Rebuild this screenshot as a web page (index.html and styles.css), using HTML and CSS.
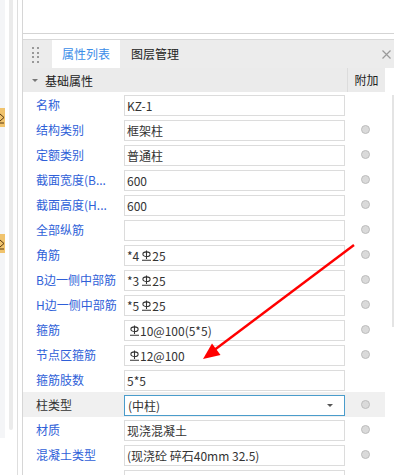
FILE: index.html
```html
<!DOCTYPE html>
<html lang="zh-CN">
<head>
    <meta charset="UTF-8">
    <meta name="viewport" content="width=device-width, initial-scale=1.0">
    <title>属性列表</title>
    <link rel="stylesheet" href="styles.css">
</head>
<body>
    <div class="app">
        <!-- 左侧停靠栏 -->
        <div class="dock">
            <div class="dock-strip">
                <span class="dock-tag tag-1"><svg width="5" height="19" viewBox="0 0 5 19"><path d="M0 6 L4 9.5 L0 13 M0 15 H4" stroke="#5a3a10" stroke-width="1" fill="none"/></svg></span>
                <span class="dock-tag tag-2"><svg width="5" height="19" viewBox="0 0 5 19"><path d="M0 6 L4 9.5 L0 13 M0 15 H4" stroke="#5a3a10" stroke-width="1" fill="none"/></svg></span>
            </div>
            <div class="dock-track"></div>
            <div class="dock-line"></div>
        </div>

        <div class="main">
            <div class="top-pane"></div>

            <div class="panel">
                <!-- 标签页 -->
                <div class="tabs">
                    <span class="grip"><i></i><i></i><i></i><i></i><i></i><i></i><i></i><i></i></span>
                    <span class="tab active">属性列表</span>
                    <span class="tab">图层管理</span>
                    <span class="close">
                        <svg width="9" height="9" viewBox="0 0 9 9"><path d="M0.5 0.5 L8.5 8.5 M8.5 0.5 L0.5 8.5" stroke="#9a9a9a" stroke-width="1.2" fill="none"/></svg>
                    </span>
                </div>

                <div class="props">
                    <div class="grid">
                        <div class="section">
                            <span class="caret"></span>
                            <span class="section-title">基础属性</span>
                            <span class="extra-head">附加</span>
                        </div>

                        <div class="row">
                            <span class="label">名称</span>
                            <span class="value">KZ-1</span>
                            <span class="extra"></span>
                        </div>
                        <div class="row">
                            <span class="label">结构类别</span>
                            <span class="value">框架柱</span>
                            <span class="extra"><i class="dot"></i></span>
                        </div>
                        <div class="row">
                            <span class="label">定额类别</span>
                            <span class="value">普通柱</span>
                            <span class="extra"><i class="dot"></i></span>
                        </div>
                        <div class="row">
                            <span class="label">截面宽度(B...</span>
                            <span class="value">600</span>
                            <span class="extra"><i class="dot"></i></span>
                        </div>
                        <div class="row">
                            <span class="label">截面高度(H...</span>
                            <span class="value">600</span>
                            <span class="extra"><i class="dot"></i></span>
                        </div>
                        <div class="row">
                            <span class="label">全部纵筋</span>
                            <span class="value"></span>
                            <span class="extra"><i class="dot"></i></span>
                        </div>
                        <div class="row">
                            <span class="label">角筋</span>
                            <span class="value">*4<svg class="bar" viewBox="0 0 9 11"><path d="M4.5 0.5 V9 M0 10.2 H9" stroke="#333" stroke-width="1.1" fill="none"/><ellipse cx="4.5" cy="4.2" rx="3.6" ry="2.3" stroke="#333" stroke-width="1.1" fill="none"/></svg>25</span>
                            <span class="extra"><i class="dot"></i></span>
                        </div>
                        <div class="row">
                            <span class="label">B边一侧中部筋</span>
                            <span class="value">*3<svg class="bar" viewBox="0 0 9 11"><path d="M4.5 0.5 V9 M0 10.2 H9" stroke="#333" stroke-width="1.1" fill="none"/><ellipse cx="4.5" cy="4.2" rx="3.6" ry="2.3" stroke="#333" stroke-width="1.1" fill="none"/></svg>25</span>
                            <span class="extra"><i class="dot"></i></span>
                        </div>
                        <div class="row">
                            <span class="label">H边一侧中部筋</span>
                            <span class="value">*5<svg class="bar" viewBox="0 0 9 11"><path d="M4.5 0.5 V9 M0 10.2 H9" stroke="#333" stroke-width="1.1" fill="none"/><ellipse cx="4.5" cy="4.2" rx="3.6" ry="2.3" stroke="#333" stroke-width="1.1" fill="none"/></svg>25</span>
                            <span class="extra"><i class="dot"></i></span>
                        </div>
                        <div class="row">
                            <span class="label">箍筋</span>
                            <span class="value"><svg class="bar" viewBox="0 0 9 11"><path d="M4.5 0.5 V9 M0 10.2 H9" stroke="#333" stroke-width="1.1" fill="none"/><ellipse cx="4.5" cy="4.2" rx="3.6" ry="2.3" stroke="#333" stroke-width="1.1" fill="none"/></svg>10@100(5*5)</span>
                            <span class="extra"><i class="dot"></i></span>
                        </div>
                        <div class="row">
                            <span class="label">节点区箍筋</span>
                            <span class="value"><svg class="bar" viewBox="0 0 9 11"><path d="M4.5 0.5 V9 M0 10.2 H9" stroke="#333" stroke-width="1.1" fill="none"/><ellipse cx="4.5" cy="4.2" rx="3.6" ry="2.3" stroke="#333" stroke-width="1.1" fill="none"/></svg>12@100</span>
                            <span class="extra"><i class="dot"></i></span>
                        </div>
                        <div class="row">
                            <span class="label">箍筋肢数</span>
                            <span class="value">5*5</span>
                            <span class="extra"></span>
                        </div>
                        <div class="row selected">
                            <span class="label">柱类型</span>
                            <span class="value select">(中柱)<i class="drop"></i></span>
                            <span class="extra"><i class="dot"></i></span>
                        </div>
                        <div class="row">
                            <span class="label">材质</span>
                            <span class="value">现浇混凝土</span>
                            <span class="extra"><i class="dot"></i></span>
                        </div>
                        <div class="row">
                            <span class="label">混凝土类型</span>
                            <span class="value">(现浇砼 碎石40mm 32.5)</span>
                            <span class="extra"><i class="dot"></i></span>
                        </div>
                        <div class="row">
                            <span class="label"></span>
                            <span class="value"></span>
                            <span class="extra"></span>
                        </div>
                    </div>
                    <div class="vscroll"><div class="thumb"></div></div>
                </div>
            </div>
        </div>
    </div>

    <!-- 红色箭头标注 -->
    <svg class="arrow" width="394" height="475" viewBox="0 0 394 475">
        <line x1="354" y1="245" x2="213" y2="351" stroke="#ff0000" stroke-width="2.4"/>
        <polygon points="203,359 220.5,355 212,343.5" fill="#ff0000"/>
    </svg>
</body>
</html>
```

FILE: styles.css
```css
/* 属性列表面板 */
html, body {
    margin: 0;
    padding: 0;
}
body {
    width: 394px;
    height: 475px;
    overflow: hidden;
    position: relative;
    background: #fff;
    font-family: "Noto Sans CJK SC", "Noto Sans", sans-serif;
    font-size: 12px;
    color: #333;
}
.app {
    display: flex;
    height: 475px;
}

/* 左侧停靠栏 */
.dock {
    width: 22px;
    display: flex;
    align-items: flex-start;
    flex-shrink: 0;
}
.dock-strip {
    width: 5px;
    height: 438px;
    background: #f4f5f7;
    position: relative;
    overflow: hidden;
}
.dock-tag {
    position: absolute;
    left: 0;
    width: 5px;
    height: 19px;
    background: #f0c36d;
    display: flex;
}
.tag-1 { top: 108px; }
.tag-2 { top: 234px; }
.dock-track {
    width: 4px;
    height: 430px;
    margin-left: 4px;
    background: #ebebeb;
    border-radius: 0 0 2px 2px;
}
.dock-line {
    width: 1px;
    height: 475px;
    margin-left: 4px;
    background: #dedede;
}

/* 主区域 */
.main {
    flex: 1;
    border-left: 1px solid #d6d6d6;
    display: flex;
    flex-direction: column;
    min-height: 0;
}
.top-pane {
    flex-shrink: 0;
    height: 33px;
    border-bottom: 1px solid #d4d4d4;
    margin-bottom: 5px;
}
.panel {
    flex-shrink: 0;
    border-top: 1px solid #d9d9d9;
}

/* 标签页 */
.tabs {
    height: 28px;
    background: #ececec;
    display: flex;
    align-items: stretch;
}
.grip {
    width: 7px;
    margin: 7px 13px 0 9px;
    display: grid;
    grid-template-columns: 2px 2px;
    grid-auto-rows: 2px;
    column-gap: 3px;
    row-gap: 2.5px;
}
.grip i {
    background: #999;
}
.tab {
    padding: 0 10px;
    line-height: 28px;
    color: #222;
}
.tab.active {
    background: #fff;
    color: #3b8de8;
}
.tab + .tab {
    padding-left: 11px;
}
.close {
    margin-left: auto;
    margin-right: 3px;
    display: flex;
    align-items: center;
    padding-top: 1px;
}

/* 属性表 */
.props {
    display: flex;
}
.grid {
    width: 362px;
}
.section {
    height: 24px;
    background: #ebebeb;
    display: flex;
    align-items: center;
    color: #222;
}
.caret {
    width: 0;
    height: 0;
    margin: 0 7px 0 9px;
    border-left: 3px solid transparent;
    border-right: 3px solid transparent;
    border-top: 3px solid #777;
}
.extra-head {
    margin-left: auto;
    width: 37px;
    height: 24px;
    line-height: 24px;
    text-align: center;
    border-left: 1px solid #dcdcdc;
}
.row {
    display: grid;
    grid-template-columns: 101px 221px 40px;
    height: 25px;
    align-items: center;
}
.row.selected {
    background: #f0f0f0;
}
.label {
    padding-left: 13px;
    color: #2f5fd8;
    white-space: nowrap;
    overflow: hidden;
}
.row.selected .label {
    color: #333;
}
.value {
    box-sizing: border-box;
    height: 21px;
    margin-top: 1px;
    border: 1px solid #dcdcdc;
    background: #fff;
    padding-left: 2px;
    line-height: 19px;
    white-space: nowrap;
    display: flex;
    align-items: center;
}
.value.select {
    border-color: #4a9ccb;
    padding-left: 3px;
}
.drop {
    margin-left: auto;
    margin-right: 11px;
    width: 0;
    height: 0;
    border-left: 3px solid transparent;
    border-right: 3px solid transparent;
    border-top: 3px solid #555;
}
.bar {
    width: 9px;
    height: 11px;
    margin: 0 1px 0 3px;
}
.extra {
    display: flex;
    justify-content: center;
    align-items: center;
}
.dot {
    width: 7px;
    height: 7px;
    border-radius: 50%;
    background: #dadada;
    border: 1px solid #bdbdbd;
}
.vscroll {
    width: 9px;
    display: flex;
    justify-content: flex-end;
}
.thumb {
    width: 2px;
    height: 232px;
    margin-top: 27px;
    background: #e4e4e4;
}

/* 红色箭头 */
.arrow {
    position: absolute;
    top: 0;
    left: 0;
    pointer-events: none;
}
```
